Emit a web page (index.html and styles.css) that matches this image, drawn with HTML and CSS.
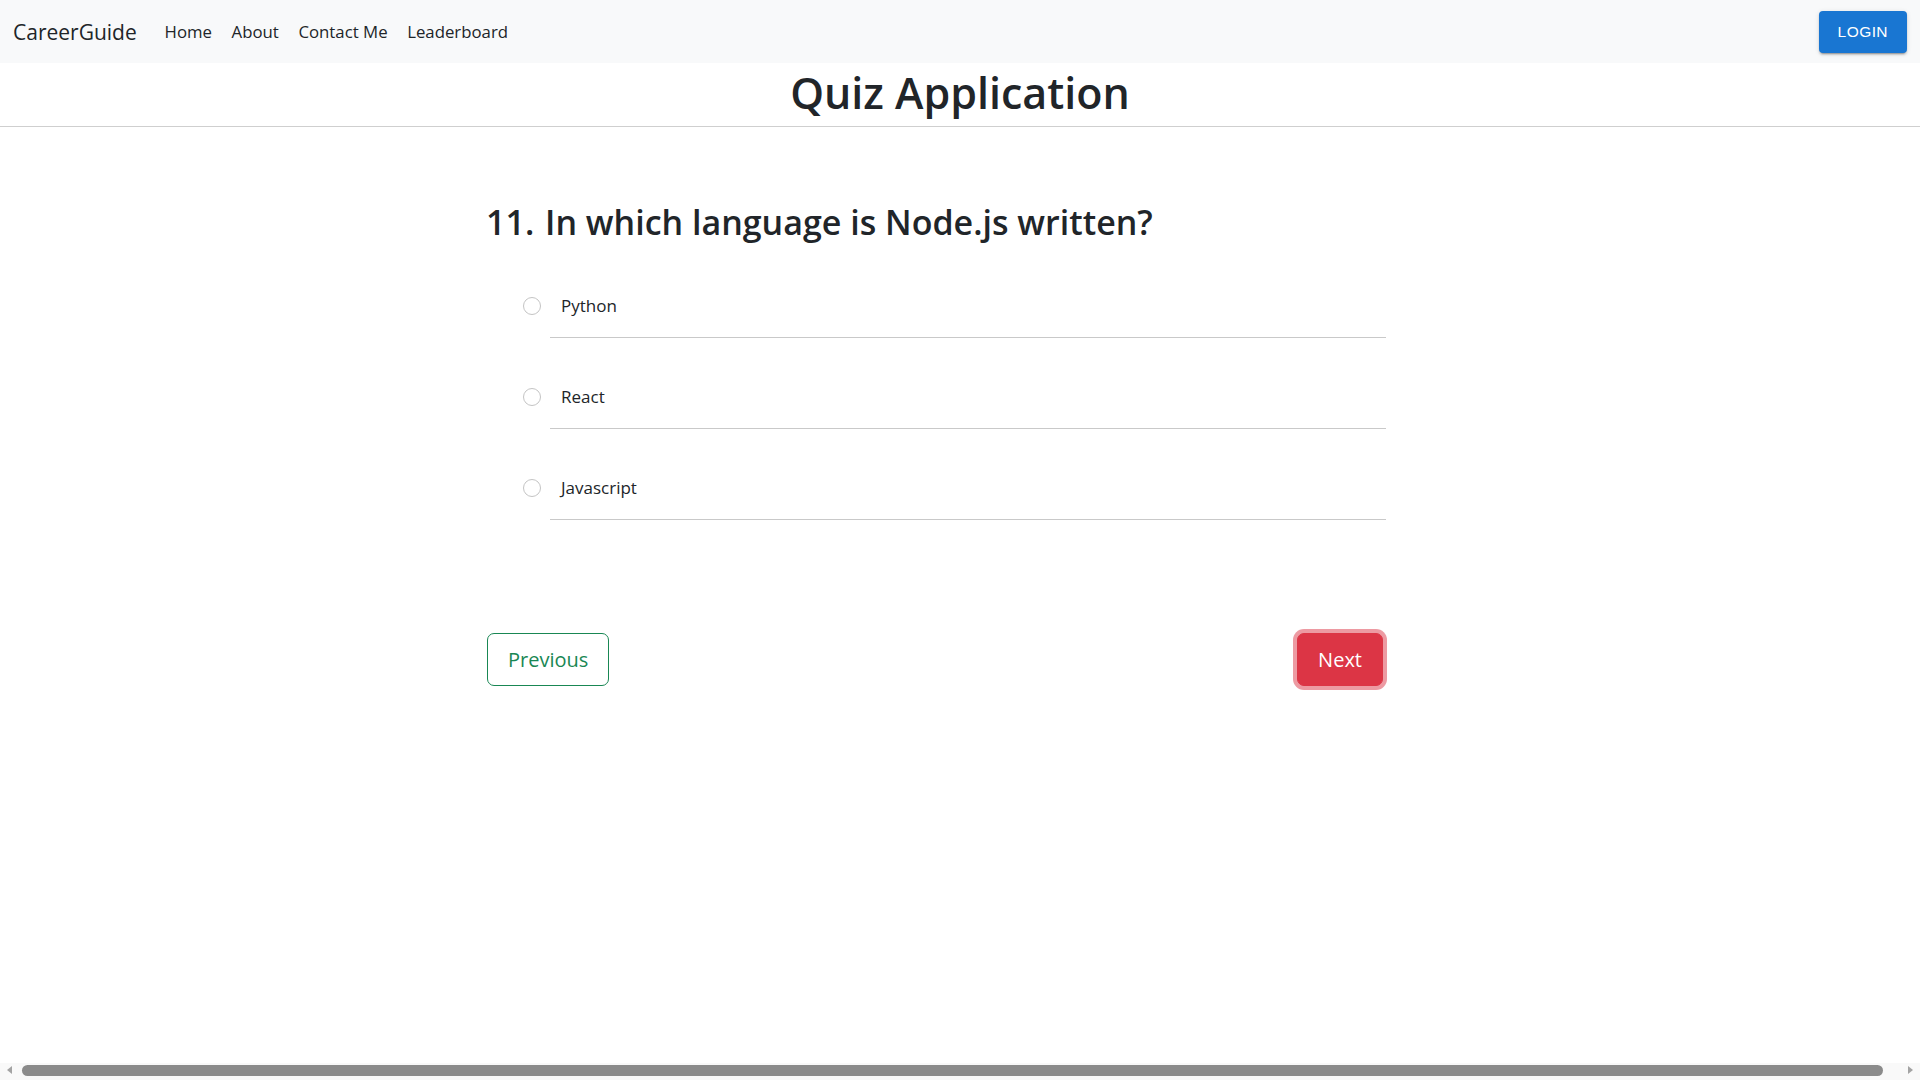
FILE: index.html
```html
<!DOCTYPE html>
<html lang="en">
<head>
<meta charset="utf-8">
<title>Quiz Application</title>
<link rel="stylesheet" href="styles.css">
</head>
<body>
<div class="page">
  <nav class="navbar">
    <a class="brand" href="#">CareerGuide</a>
    <ul class="nav-links">
      <li><a href="#">Home</a></li>
      <li><a href="#">About</a></li>
      <li><a href="#">Contact Me</a></li>
      <li><a href="#">Leaderboard</a></li>
    </ul>
    <button class="login-btn" type="button">LOGIN</button>
  </nav>

  <header class="page-header">
    <h1>Quiz Application</h1>
  </header>

  <main class="quiz">
    <div class="quiz-card">
      <h2 class="question"><span class="q-num">11.</span> In which language is Node.js written?</h2>
      <ul class="options">
        <li class="option"><input type="radio" name="answer" id="opt1"><label for="opt1">Python</label></li>
        <li class="option"><input type="radio" name="answer" id="opt2"><label for="opt2">React</label></li>
        <li class="option"><input type="radio" name="answer" id="opt3"><label for="opt3">Javascript</label></li>
      </ul>
      <div class="quiz-actions">
        <button class="btn btn-outline-success" type="button">Previous</button>
        <button class="btn btn-danger is-focused" type="button">Next</button>
      </div>
    </div>
  </main>

  <div class="hscroll" aria-hidden="true">
    <span class="arrow arrow-left"></span>
    <span class="thumb"></span>
    <span class="arrow arrow-right"></span>
  </div>
</div>
</body>
</html>
```

FILE: styles.css
```css
* {
  box-sizing: border-box;
}

html, body {
  margin: 0;
  padding: 0;
}

body {
  font-family: "Open Sans", "Noto Sans", sans-serif;
  color: #212529;
  background: #ffffff;
}

.page {
  height: 100vh;
  display: flex;
  flex-direction: column;
  overflow: hidden;
}

/* ---------- Navbar ---------- */
.navbar {
  flex: none;
  height: 63px;
  background: #f8f9fa;
  display: flex;
  align-items: center;
  padding: 0 13px 0 13px;
}

.brand {
  font-size: 21px;
  line-height: 30px;
  color: #212529;
  text-decoration: none;
  margin-right: 18px;
}

.nav-links {
  display: flex;
  list-style: none;
  margin: 0;
  padding: 0;
}

.nav-links a {
  display: block;
  padding: 0 9.8px;
  font-size: 16.8px;
  line-height: 24px;
  color: #212529;
  text-decoration: none;
}

.login-btn {
  margin-left: auto;
  height: 42px;
  padding: 0 19px;
  border: 0;
  border-radius: 4px;
  background: #1976d2;
  color: #ffffff;
  font-family: "Liberation Sans", Arial, sans-serif;
  font-size: 15.5px;
  letter-spacing: 0.43px;
  box-shadow: 0 3px 1px -2px rgba(0, 0, 0, 0.2),
              0 2px 2px 0 rgba(0, 0, 0, 0.14),
              0 1px 5px 0 rgba(0, 0, 0, 0.12);
}

/* ---------- Page header ---------- */
.page-header {
  flex: none;
  height: 64px;
  border-bottom: 1px solid #cfcfcf;
  display: flex;
  justify-content: center;
}

.page-header h1 {
  margin: 0;
  font-size: 43px;
  font-weight: 600;
  line-height: 60px;
  color: #212529;
}

/* ---------- Quiz ---------- */
.quiz {
  flex: 1;
}

.quiz-card {
  width: 900px;
  margin-left: 486px;
}

.question {
  margin: 75px 0 0 0;
  font-size: 34px;
  font-weight: 600;
  line-height: 41px;
  color: #212529;
}

.q-num {
  margin-right: 2px;
}

.options {
  list-style: none;
  margin: 4px 0 0 0;
  padding: 0;
}

.option {
  display: flex;
}

.option input {
  appearance: none;
  -webkit-appearance: none;
  flex: none;
  width: 18px;
  height: 18px;
  margin: 50px 9px 0 37px;
  border: 1px solid #c4c4c4;
  border-radius: 50%;
  background: #ffffff;
}

.option label {
  flex: 1;
  padding: 47px 0 19px 11px;
  font-size: 17px;
  line-height: 24px;
  border-bottom: 1px solid #c9c9c9;
  color: #212529;
}

.quiz-actions {
  display: flex;
  justify-content: space-between;
  margin-top: 113px;
  padding: 0 3px 0 1px;
}

.btn {
  font-family: inherit;
  font-size: 20px;
  line-height: 31px;
  padding: 10px 20px;
  border: 1px solid transparent;
  border-radius: 7px;
  background: transparent;
}

.btn-outline-success {
  color: #198754;
  border-color: #198754;
}

.btn-danger {
  color: #ffffff;
  background: #dc3545;
  border-color: #dc3545;
}

.btn-danger.is-focused {
  box-shadow: 0 0 0 4px rgba(220, 53, 69, 0.5);
}

/* ---------- Horizontal scrollbar look ---------- */
.hscroll {
  flex: none;
  height: 17px;
  background: #f9f9f9;
  display: flex;
  align-items: center;
  padding: 0 7px 3px 7px;
}

.arrow {
  flex: none;
  width: 0;
  height: 0;
  border-top: 4px solid transparent;
  border-bottom: 4px solid transparent;
}

.arrow-left {
  border-right: 5px solid #a3a3a3;
}

.arrow-right {
  border-left: 5px solid #a3a3a3;
}

.thumb {
  flex: 1;
  height: 11px;
  margin: 0 25px 0 10px;
  border-radius: 6px;
  background: #8b8b8b;
}
```
